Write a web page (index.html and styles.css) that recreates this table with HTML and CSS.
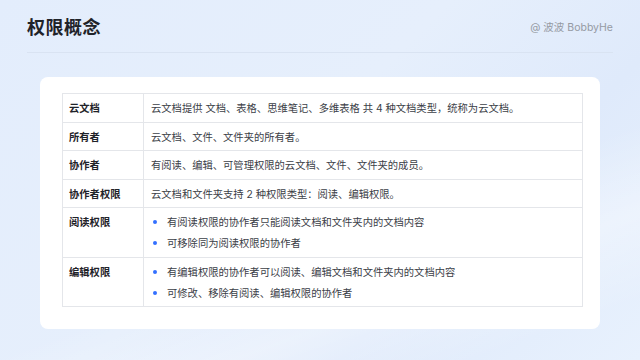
FILE: index.html
```html
<!DOCTYPE html>
<html lang="zh-CN">
<head>
    <meta charset="utf-8">
    <title>权限概念</title>
    <link rel="stylesheet" href="styles.css">
</head>
<body>
    <div class="page">
        <div class="header">
            <h1>权限概念</h1>
            <span class="author">@ 波波 BobbyHe</span>
        </div>

        <div class="card">
            <table class="concepts">
                <tr>
                    <th>云文档</th>
                    <td>云文档提供 文档、表格、思维笔记、多维表格 共 4 种文档类型，统称为云文档。</td>
                </tr>
                <tr>
                    <th>所有者</th>
                    <td>云文档、文件、文件夹的所有者。</td>
                </tr>
                <tr>
                    <th>协作者</th>
                    <td>有阅读、编辑、可管理权限的云文档、文件、文件夹的成员。</td>
                </tr>
                <tr>
                    <th>协作者权限</th>
                    <td>云文档和文件夹支持 2 种权限类型：阅读、编辑权限。</td>
                </tr>
                <tr>
                    <th>阅读权限</th>
                    <td>
                        <ul class="points">
                            <li>有阅读权限的协作者只能阅读文档和文件夹内的文档内容</li>
                            <li>可移除同为阅读权限的协作者</li>
                        </ul>
                    </td>
                </tr>
                <tr>
                    <th>编辑权限</th>
                    <td>
                        <ul class="points">
                            <li>有编辑权限的协作者可以阅读、编辑文档和文件夹内的文档内容</li>
                            <li>可修改、移除有阅读、编辑权限的协作者</li>
                        </ul>
                    </td>
                </tr>
            </table>
        </div>
    </div>
</body>
</html>
```

FILE: styles.css
```css
html, body {
    margin: 0;
    padding: 0;
}

body {
    width: 640px;
    height: 360px;
    overflow: hidden;
    font-family: Inter, "Noto Sans CJK SC", sans-serif;
    color: #1f2329;
    background:
        linear-gradient(160deg, rgba(255, 255, 255, 0) 60%, rgba(255, 255, 255, 0.35) 75%, rgba(255, 255, 255, 0) 90%),
        linear-gradient(135deg, #e3edfc 0%, #e6effc 45%, #dfeafb 70%, #e8f1fd 100%);
}

.page {
    display: flex;
    flex-direction: column;
}

.header {
    display: flex;
    justify-content: space-between;
    align-items: center;
    margin: 0 27px 0 27px;
    height: 52px;
    border-bottom: 1px solid #d9e3f2;
}

h1 {
    margin: 0;
    font-size: 18px;
    font-weight: 700;
    letter-spacing: 0.5px;
    color: #1f2329;
}

.author {
    font-size: 10.5px;
    color: #959aa3;
}

.card {
    margin: 24px 40px 0 40px;
    padding: 16px 17px 22px 22px;
    background-color: #ffffff;
    border-radius: 8px;
}

.concepts {
    width: 100%;
    border-collapse: collapse;
    font-size: 10.3px;
    line-height: 16px;
}

.concepts th,
.concepts td {
    border: 1px solid #e4e6ea;
    padding: 6px 7px 5.5px 7px;
    vertical-align: top;
    text-align: left;
}

.concepts th {
    width: 67px;
    font-weight: 600;
    color: #1f2329;
    padding-left: 6px;
}

.concepts td {
    color: #3b4047;
}

.points {
    margin: 0;
    padding: 0;
    list-style: none;
    display: flex;
    flex-direction: column;
    gap: 5px;
}

.points li {
    display: flex;
    align-items: center;
    gap: 10px;
    padding-left: 2px;
}

.points li:before {
    content: "";
    width: 4px;
    height: 4px;
    border-radius: 50%;
    background-color: #3370ff;
    flex-shrink: 0;
}
```
